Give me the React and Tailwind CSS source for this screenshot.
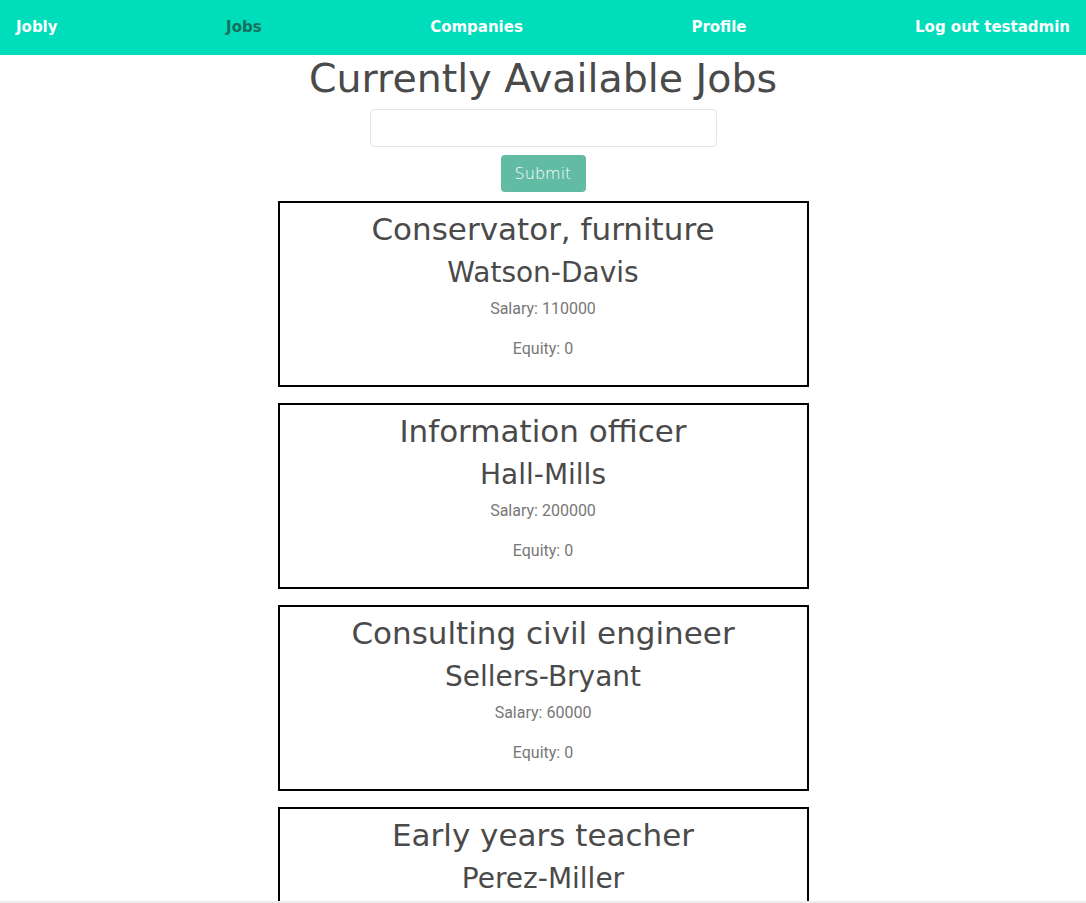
import React from 'react';

const jobs = [
  { title: 'Conservator, furniture', company: 'Watson-Davis', salary: 110000, equity: 0 },
  { title: 'Information officer', company: 'Hall-Mills', salary: 200000, equity: 0 },
  { title: 'Consulting civil engineer', company: 'Sellers-Bryant', salary: 60000, equity: 0 },
  { title: 'Early years teacher', company: 'Perez-Miller', salary: 90000, equity: 0 },
];

const heading = { fontFamily: '"DejaVu Sans", "Open Sans", sans-serif' };

function NavBar() {
  return (
    <nav
      className="h-[55px] bg-[#00ddbb] flex items-center justify-between px-4 text-[15px] font-bold text-white"
      style={heading}
    >
      <a href="#">Jobly</a>
      <a href="#" className="text-[#17705f]">Jobs</a>
      <a href="#">Companies</a>
      <a href="#">Profile</a>
      <a href="#">Log out testadmin</a>
    </nav>
  );
}

function JobCard({ job }) {
  return (
    <div className="w-[531px] mx-auto mb-4 border-2 border-black pt-[7px] pb-2 px-2 text-center">
      <h2 className="text-[31px] leading-[38px] mb-2 text-[#4a4a4a]" style={heading}>{job.title}</h2>
      <h3 className="text-[28px] leading-[34px] mb-[7px] text-[#4a4a4a]" style={heading}>{job.company}</h3>
      <p className="text-base leading-6 mb-4 text-[#777]">Salary: {job.salary}</p>
      <p className="text-base leading-6 mb-4 text-[#777]">Equity: {job.equity}</p>
    </div>
  );
}

export default function App() {
  return (
    <div className="min-h-screen bg-white" style={{ fontFamily: 'Roboto, "Liberation Sans", sans-serif' }}>
      <NavBar />
      <div className="text-center">
        <h1 className="text-[39.5px] leading-[48px] -mt-px text-[#4a4a4a]" style={heading}>Currently Available Jobs</h1>
        <form className="mt-[7px] flex flex-col items-center" onSubmit={(e) => e.preventDefault()}>
          <input type="text" className="w-[347px] h-[38px] border border-[#e6e6e6] rounded px-3 outline-none" />
          <button
            type="submit"
            className="mt-2 w-[85px] h-[37px] rounded bg-[#62bba3] text-white text-base font-light"
            style={heading}
          >
            Submit
          </button>
        </form>
        <div className="mt-[9px]">
          {jobs.map((job) => (
            <JobCard key={job.title} job={job} />
          ))}
        </div>
      </div>
      <div className="fixed bottom-0 left-0 right-0 h-[2px] bg-[#ececec]" />
    </div>
  );
}
